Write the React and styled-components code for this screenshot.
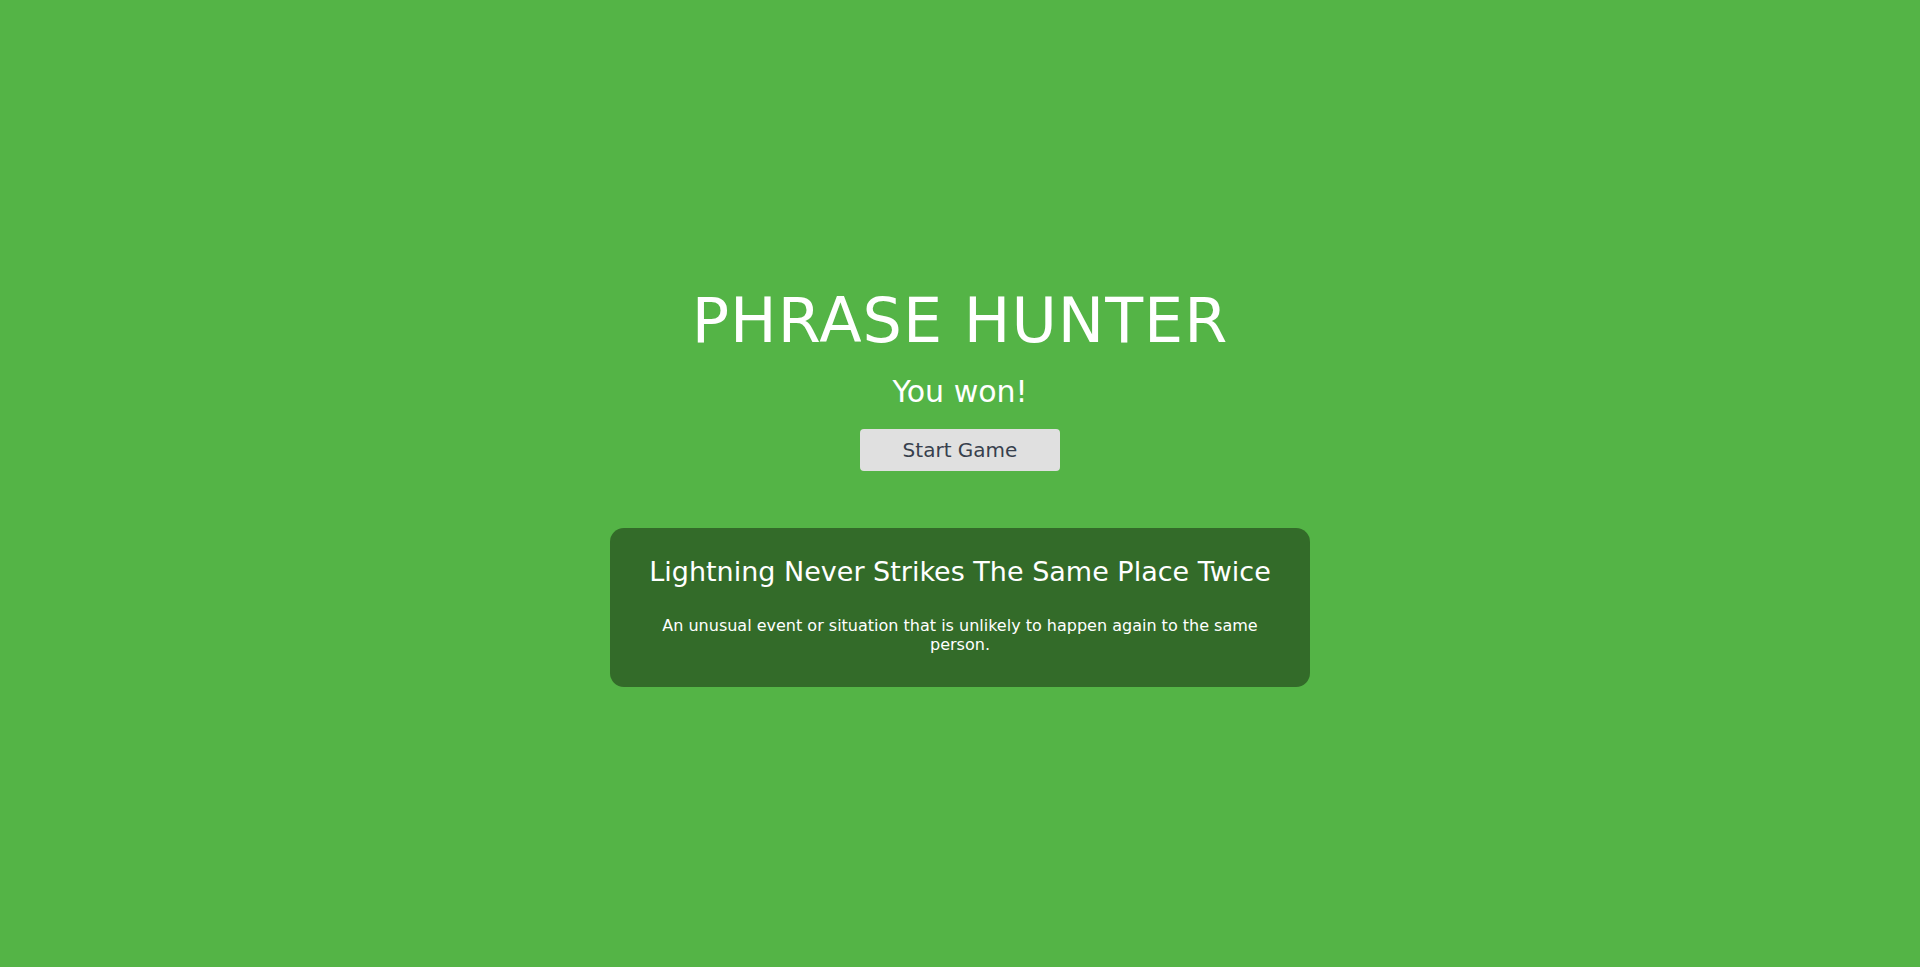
import React from 'react';
import styled, { createGlobalStyle } from 'styled-components';

const GlobalStyle = createGlobalStyle`
  html, body {
    margin: 0;
    padding: 0;
    height: 100%;
  }
  body {
    background: #54b446;
    font-family: "DejaVu Sans", "Open Sans", sans-serif;
  }
  #root {
    height: 100%;
  }
`;

const Overlay = styled.div`
  min-height: 100vh;
  box-sizing: border-box;
  padding-top: 5px;
  display: flex;
  flex-direction: column;
  align-items: center;
  justify-content: center;
  color: #fff;
  text-align: center;
`;

const Title = styled.h1`
  margin: 0;
  font-size: 62px;
  font-weight: 400;
  line-height: 1.15;
  letter-spacing: 1px;
`;

const Message = styled.h2`
  margin: 17px 0 0;
  font-size: 30px;
  font-weight: 400;
  line-height: 1.2;
`;

const StartButton = styled.button`
  margin-top: 19px;
  width: 200px;
  height: 42px;
  border: none;
  border-radius: 4px;
  background: #e0e0e0;
  color: #37404d;
  font-family: inherit;
  font-size: 20px;
  cursor: pointer;
`;

const PhraseCard = styled.div`
  margin-top: 57px;
  width: 700px;
  box-sizing: border-box;
  padding: 26px 25px 33px;
  background: #336b29;
  border-radius: 14px;
`;

const PhraseTitle = styled.h3`
  margin: 0;
  font-size: 27px;
  font-weight: 400;
  line-height: 35px;
`;

const PhraseMeaning = styled.p`
  margin: 27px 0 0;
  padding: 0 15px;
  font-size: 16px;
  line-height: 19px;
`;

export default function App() {
  return (
    <>
      <GlobalStyle />
      <Overlay>
        <Title>PHRASE HUNTER</Title>
        <Message>You won!</Message>
        <StartButton>Start Game</StartButton>
        <PhraseCard>
          <PhraseTitle>Lightning Never Strikes The Same Place Twice</PhraseTitle>
          <PhraseMeaning>
            An unusual event or situation that is unlikely to happen again to the same person.
          </PhraseMeaning>
        </PhraseCard>
      </Overlay>
    </>
  );
}
